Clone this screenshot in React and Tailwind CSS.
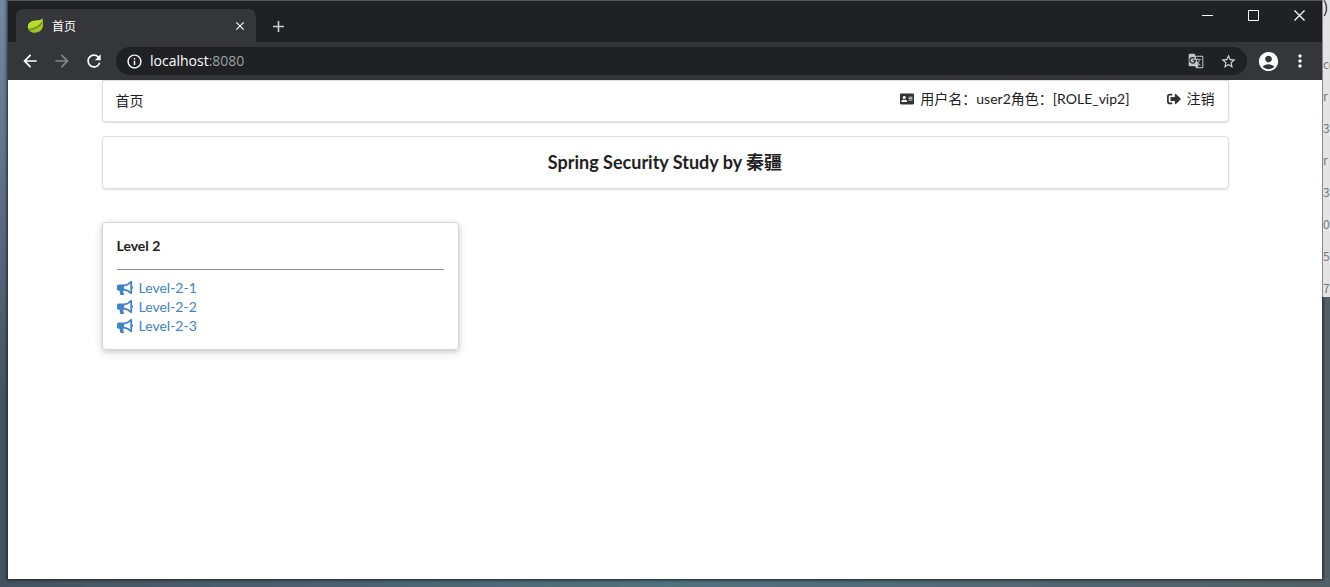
import { FaAddressCard, FaBullhorn, FaSignOutAlt } from "react-icons/fa";
import {
  MdAccountCircle,
  MdAdd,
  MdArrowBack,
  MdArrowForward,
  MdClose,
  MdGTranslate,
  MdInfoOutline,
  MdMoreVert,
  MdRefresh,
  MdStarBorder,
} from "react-icons/md";

const levels = ["Level-2-1", "Level-2-2", "Level-2-3"];
const backgroundLines = ["", "co", "r", "3", "r", "35", "07", "51", "75"];

function Leaf() {
  return (
    <svg viewBox="0 0 18 18" className="size-[17px] shrink-0" aria-hidden="true">
      <path d="M16.4 1.2C15 3.600 11 3.400 7 4.100C3 4.900 .6 7.800 1 11.200c.2 2.800 2 4.800 4.600 5.200C12 17.400 17 14.500 17 8c0-2.500-.2-4.700-.6-6.800Z" fill="#a3c626" />
      <path d="M1 11.200C.6 7.800 3 4.900 7 4.100c4-.7 8-.5 9.400-2.900C15.800 7 10 10 1 12Z" fill="#bcd930" />
      <path d="M2 13.800C8 13 13 10.500 15.800 6" fill="none" stroke="#66901a" strokeWidth="1.500" />
    </svg>
  );
}

function TitleBar() {
  return (
    <div className="flex h-[42px] items-end border-t border-[#55565a] bg-[#202124] pl-2 text-white">
      <div className="flex h-[33px] w-60 items-center rounded-t-lg bg-[#35363a] pl-[11px] pr-2">
        <Leaf />
        <span className="ml-2 flex-1 text-xs">首页</span>
        <button aria-label="Close tab" className="flex size-4 items-center justify-center">
          <MdClose size={14} stroke="currentColor" />
        </button>
      </div>
      <button aria-label="New tab" className="ml-3 flex h-8 w-5 items-center justify-center text-[#d0d1d3]">
        <MdAdd size={19} />
      </button>
      <div className="ml-auto flex self-start">
        <button aria-label="Minimize" className="flex h-7 w-[46px] items-center justify-center">
          <svg viewBox="0 0 11 11" className="size-[11px]" stroke="currentColor">
            <path d="M0 5.500h11" />
          </svg>
        </button>
        <button aria-label="Maximize" className="flex h-7 w-[46px] items-center justify-center">
          <svg viewBox="0 0 11 11" className="size-[11px]" fill="none" stroke="currentColor">
            <path d="M.5.5h10v10H.5z" />
          </svg>
        </button>
        <button aria-label="Close" className="flex h-7 w-[46px] items-center justify-center">
          <svg viewBox="0 0 11 11" className="size-[11px]" stroke="currentColor" strokeWidth="1.300">
            <path d="m.5.5 10 10m0-10-10 10" />
          </svg>
        </button>
      </div>
    </div>
  );
}

function Toolbar() {
  return (
    <div className="flex h-[38px] items-center bg-[#35363a] px-3 text-white">
      <button aria-label="Back" className="mr-3 flex w-5 justify-center">
        <MdArrowBack size={20} />
      </button>
      <button aria-label="Forward" className="mr-3 flex w-5 justify-center text-[#85868a]">
        <MdArrowForward size={20} />
      </button>
      <button aria-label="Reload" className="mr-3 flex w-5 justify-center">
        <MdRefresh size={20} />
      </button>
      <div className="flex h-7 flex-1 items-center rounded-full bg-[#202124] px-2.5">
        <MdInfoOutline size={17} />
        <a href="#" className="ml-[7px] flex-1 font-['Open_Sans',sans-serif] text-sm">
          localhost<span className="text-[#9aa0a6]">:8080</span>
        </a>
        <button aria-label="Translate" className="mr-4 text-[#c5c6c8]">
          <MdGTranslate size={16} />
        </button>
        <button aria-label="Bookmark" className="text-[#d5d6d8]">
          <MdStarBorder size={17} />
        </button>
      </div>
      <button aria-label="Profile" className="ml-2.5">
        <MdAccountCircle size={23} />
      </button>
      <button aria-label="Menu" className="ml-2.5">
        <MdMoreVert size={20} />
      </button>
    </div>
  );
}

function Page() {
  return (
    <div className="flex-1 bg-white font-['Lato','Noto_Sans_CJK_SC',sans-serif] text-sm text-[#212121]">
      <main className="mx-auto max-w-[1127px]">
        <nav className="flex h-[42px] items-center rounded-b-sm border border-[#22242626] px-[13px] pb-px shadow-[0_1px_2px_0_#22242626]">
          <a href="#">首页</a>
          <a href="#" className="ml-auto flex items-center pb-[3px]">
            <FaAddressCard size={14} className="mr-[6px] text-[#333]" />
            用户名：user2角色：[ROLE_vip2]
          </a>
          <a href="#" className="ml-[37px] flex items-center pb-[3px]">
            <FaSignOutAlt size={14} className="mr-[6px] text-[#333]" />
            注销
          </a>
        </nav>

        <header className="mt-3.5 flex h-[53px] items-center justify-center rounded-sm border border-[#22242626] pb-0.5 shadow-[0_1px_2px_0_#22242626]">
          <h3 className="text-lg font-bold">Spring Security Study by 秦疆</h3>
        </header>

        <section className="mt-[33px] w-[357px] rounded-sm border border-[#d4d4d5] p-3.5 shadow-[0_2px_4px_0_#2224261f,0_2px_10px_0_#22242626]">
          <h5 className="leading-[18px] font-bold">Level 2</h5>
          <hr className="mt-3.5 mb-2 border-[#8e8e8e]" />
          <ul>
            {levels.map((level) => (
              <li key={level}>
                <a href="#" className="flex items-center leading-[19px] text-[#4183c4]">
                  <FaBullhorn size={16} className="mr-[6px]" />
                  {level}
                </a>
              </li>
            ))}
          </ul>
        </section>
      </main>
    </div>
  );
}

export default function App() {
  return (
    <div className="flex min-h-screen bg-[radial-gradient(circle_at_top_left,#7389a6,transparent_400px),linear-gradient(to_right,#45525f,#50717f,#536066)] pb-2 pl-2 font-['Noto_Sans_CJK_SC',sans-serif]">
      <div className="flex min-w-0 flex-1 flex-col shadow-[0_0_3px_1px_#1c2327]">
        <TitleBar />
        <Toolbar />
        <Page />
      </div>
      <aside className="h-[297px] w-2 overflow-hidden border-l border-[#888] bg-[#e4e4e4] text-xs text-[#777]" aria-hidden="true">
        <div className="h-[26px] text-base leading-3 text-[#222]">)</div>
        {backgroundLines.map((line, i) => (
          <div key={i} className="h-8 leading-3">{line}</div>
        ))}
      </aside>
    </div>
  );
}
